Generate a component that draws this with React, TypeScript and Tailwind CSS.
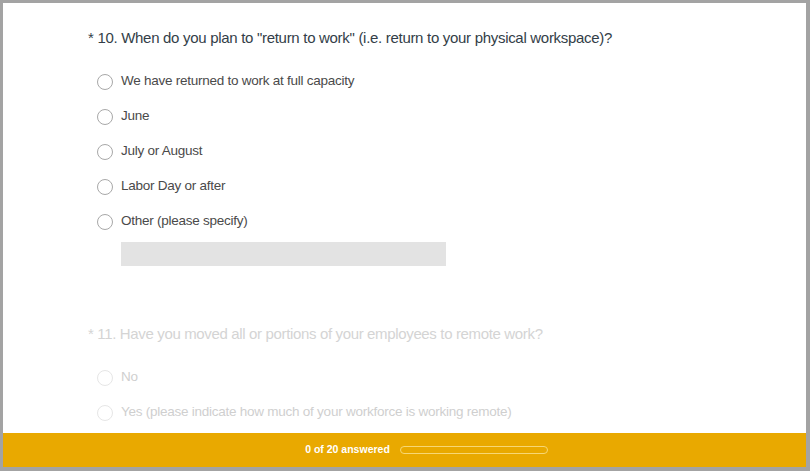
import React from 'react'

const q10Options = [
  'We have returned to work at full capacity',
  'June',
  'July or August',
  'Labor Day or after',
  'Other (please specify)',
]

const q11Options = ['No', 'Yes (please indicate how much of your workforce is working remote)']

function Radio({ faded }: { faded?: boolean }) {
  return (
    <span
      className={
        'block w-4 h-4 rounded-full border shrink-0 bg-white ' +
        (faded ? 'border-[#e6e6e6]' : 'border-[#a8a8a8]')
      }
    />
  )
}

function Option({ label, faded }: { label: string; faded?: boolean }) {
  return (
    <div className="flex items-center h-[35px] gap-[8px]">
      <Radio faded={faded} />
      <span className={faded ? 'text-[#cfcfcf]' : 'text-[#4a4a4a]'}>{label}</span>
    </div>
  )
}

export default function App() {
  return (
    <div
      className="w-[810px] h-[471px] bg-[#a3a3a3] pt-[3px] pl-[3px] pr-[4px] pb-[4px] overflow-hidden"
      style={{ fontFamily: '"Liberation Sans", Arial, sans-serif' }}
    >
      <div className="h-full flex flex-col bg-white">
        <div className="flex-1 overflow-hidden pl-[85px] pt-[25px]">
          {/* Question 10 */}
          <h2 className="text-[15px] leading-[20px] tracking-[-0.3px] text-[#333e48]">
            * 10. When do you plan to "return to work" (i.e. return to your physical workspace)?
          </h2>
          <div className="mt-[16px] pl-[9px] text-[13.5px] tracking-[-0.25px]">
            {q10Options.map(o => (
              <Option key={o} label={o} />
            ))}
            <div className="ml-[24px] mt-[3px] w-[325px] h-[24px] bg-[#e3e3e3]" />
          </div>

          {/* Question 11 (not active yet) */}
          <h2 className="mt-[58px] text-[15px] leading-[20px] tracking-[-0.35px] text-[#d4d4d4]">
            * 11. Have you moved all or portions of your employees to remote work?
          </h2>
          <div className="mt-[16px] pl-[9px] text-[13.5px] tracking-[-0.25px]">
            {q11Options.map(o => (
              <Option key={o} label={o} faded />
            ))}
          </div>
        </div>

        {/* Progress footer */}
        <div className="h-[34px] shrink-0 bg-[#e9a900] flex items-center justify-center gap-[10px] pl-[44px]">
          <span className="text-[10.5px] font-bold text-white">0 of 20 answered</span>
          <div className="w-[148px] h-[8px] rounded-full border border-[#f7d774]" />
        </div>
      </div>
    </div>
  )
}
